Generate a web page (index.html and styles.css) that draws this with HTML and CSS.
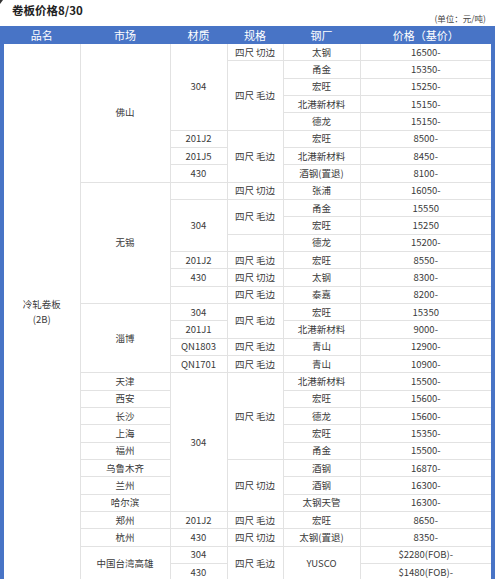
FILE: index.html
```html
<!DOCTYPE html>
<html>
<head>
<meta charset="utf-8">
<link rel="stylesheet" href="styles.css">
</head>
<body>
<div class="page">
  <div class="head">
    <span class="mark"></span>
    <div class="title">卷板价格8/30</div>
    <div class="unit">(单位：元/吨)</div>
  </div>
  <div class="frame">
    <table class="grid">
      <colgroup>
        <col class="c1"><col class="c2"><col class="c3"><col class="c4"><col class="c5"><col class="c6">
      </colgroup>
      <thead>
        <tr><th>品名</th><th>市场</th><th>材质</th><th>规格</th><th>钢厂</th><th>价格（基价）</th></tr>
      </thead>
      <tbody>
        <tr><td rowspan="31" class="name">冷轧卷板<br>(2B)</td><td rowspan="8">佛山</td><td rowspan="5">304</td><td>四尺 切边</td><td>太钢</td><td>16500-</td></tr>
        <tr><td rowspan="4">四尺 毛边</td><td>甬金</td><td>15350-</td></tr>
        <tr><td>宏旺</td><td>15250-</td></tr>
        <tr><td>北港新材料</td><td>15150-</td></tr>
        <tr><td>德龙</td><td>15150-</td></tr>
        <tr><td>201J2</td><td rowspan="3">四尺 毛边</td><td>宏旺</td><td>8500-</td></tr>
        <tr><td>201J5</td><td>北港新材料</td><td>8450-</td></tr>
        <tr><td>430</td><td>酒钢(置退)</td><td>8100-</td></tr>
        <tr><td rowspan="7">无锡</td><td></td><td>四尺 切边</td><td>张浦</td><td>16050-</td></tr>
        <tr><td rowspan="3">304</td><td rowspan="2">四尺 毛边</td><td>甬金</td><td>15550</td></tr>
        <tr><td>宏旺</td><td>15250</td></tr>
        <tr><td></td><td>德龙</td><td>15200-</td></tr>
        <tr><td>201J2</td><td>四尺 毛边</td><td>宏旺</td><td>8550-</td></tr>
        <tr><td>430</td><td>四尺 切边</td><td>太钢</td><td>8300-</td></tr>
        <tr><td></td><td>四尺 毛边</td><td>泰嘉</td><td>8200-</td></tr>
        <tr><td rowspan="4">淄博</td><td>304</td><td rowspan="2">四尺 毛边</td><td>宏旺</td><td>15350</td></tr>
        <tr><td>201J1</td><td>北港新材料</td><td>9000-</td></tr>
        <tr><td>QN1803</td><td>四尺 毛边</td><td>青山</td><td>12900-</td></tr>
        <tr><td>QN1701</td><td>四尺 毛边</td><td>青山</td><td>10900-</td></tr>
        <tr><td>天津</td><td rowspan="8">304</td><td rowspan="5">四尺 毛边</td><td>北港新材料</td><td>15500-</td></tr>
        <tr><td>西安</td><td>宏旺</td><td>15600-</td></tr>
        <tr><td>长沙</td><td>德龙</td><td>15600-</td></tr>
        <tr><td>上海</td><td>宏旺</td><td>15350-</td></tr>
        <tr><td>福州</td><td>甬金</td><td>15500-</td></tr>
        <tr><td>乌鲁木齐</td><td rowspan="3">四尺 切边</td><td>酒钢</td><td>16870-</td></tr>
        <tr><td>兰州</td><td>酒钢</td><td>16300-</td></tr>
        <tr><td>哈尔滨</td><td>太钢天管</td><td>16300-</td></tr>
        <tr><td>郑州</td><td>201J2</td><td>四尺 毛边</td><td>宏旺</td><td>8650-</td></tr>
        <tr><td>杭州</td><td>430</td><td>四尺 切边</td><td>太钢(置退)</td><td>8350-</td></tr>
        <tr><td rowspan="2">中国台湾高雄</td><td>304</td><td rowspan="2">四尺 毛边</td><td rowspan="2">YUSCO</td><td>$2280(FOB)-</td></tr>
        <tr><td>430</td><td>$1480(FOB)-</td></tr>
      </tbody>
    </table>
  </div>
</div>
</body>
</html>
```

FILE: styles.css
```css
html, body {
  margin: 0;
  padding: 0;
  background: #ffffff;
}

.page {
  width: 495px;
  font-family: "Noto Sans CJK SC", "Microsoft YaHei", sans-serif;
  color: #3a3a3a;
}

.head {
  position: relative;
  height: 26px;
  display: flex;
  justify-content: space-between;
  padding: 0 9px 0 12px;
  box-sizing: border-box;
}

.mark {
  position: absolute;
  left: 0;
  top: 0;
  width: 0;
  height: 0;
  border-left: 3px solid #333;
  border-bottom: 4px solid transparent;
}

.title {
  margin-top: 3px;
  font-size: 11.5px;
  line-height: 15px;
  font-weight: bold;
  color: #222;
}

.unit {
  align-self: flex-end;
  margin-bottom: 1px;
  font-size: 8.5px;
  line-height: 13px;
  color: #444;
}

.frame {
  border-left: 4px solid #4874c6;
  border-right: 4px solid #4874c6;
  width: 487px;
}

.grid {
  width: 487px;
  table-layout: fixed;
  border-collapse: collapse;
  border-style: hidden;
}

.c1 { width: 76px; }
.c2 { width: 90px; }
.c3 { width: 57px; }
.c4 { width: 56px; }
.c5 { width: 77px; }
.c6 { width: 131px; }

.grid th {
  height: 17px;
  padding: 0;
  background: #4874c6;
  color: #ffffff;
  font-weight: normal;
  font-size: 11px;
  line-height: 12px;
  border: 1px solid #4874c6;
}

.grid td {
  height: 16.33px;
  padding: 0;
  text-align: center;
  vertical-align: middle;
  font-size: 9.5px;
  line-height: 11px;
  white-space: nowrap;
  border: 1px solid #e2e2e2;
}

.grid td.name {
  line-height: 15px;
  font-size: 9.5px;
}
```
